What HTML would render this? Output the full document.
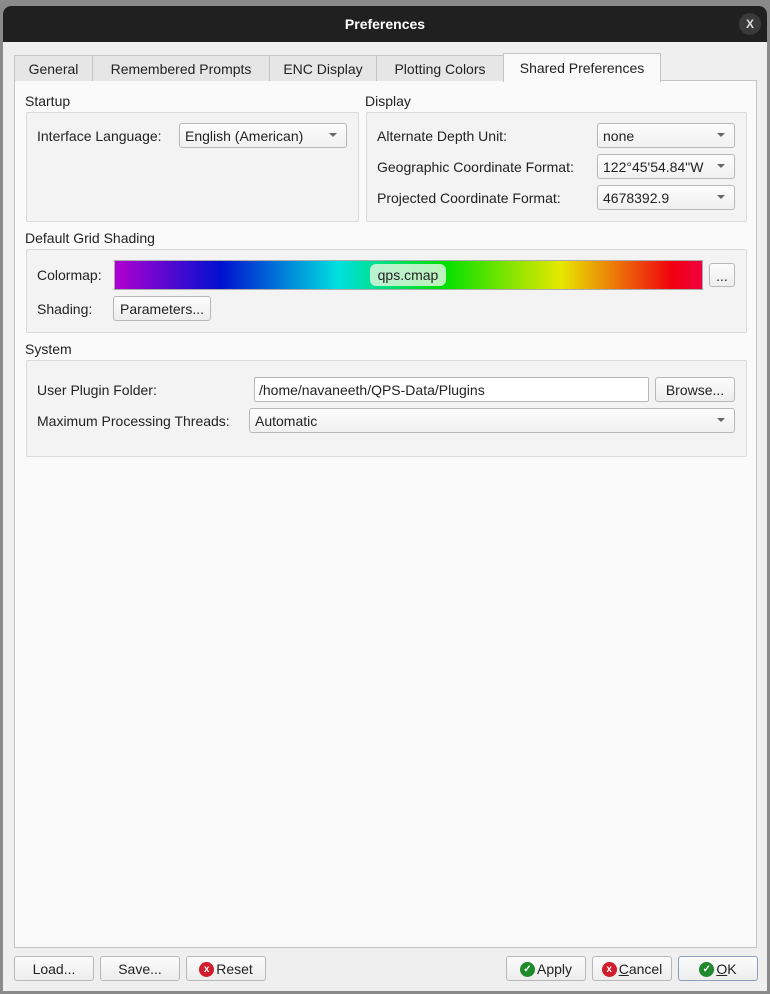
<!DOCTYPE html><html><head><style>
*{box-sizing:border-box;margin:0;padding:0}
body{width:770px;height:994px;background:#8a8a8a;font-family:"Liberation Sans",sans-serif;font-size:14px;color:#222;position:relative;overflow:hidden}
.a{position:absolute;white-space:nowrap}
.win{position:absolute;left:3px;top:6px;width:764px;height:985px;background:#efefef;border-radius:8px 8px 0 0;overflow:hidden}
.title{position:absolute;left:0;top:0;width:764px;height:36px;background:#202020;color:#fff;font-weight:bold;text-align:center;line-height:36px;font-size:14px}
.close{position:absolute;right:6px;top:7px;width:22px;height:22px;border-radius:50%;background:#3a3a3a;color:#ddd;font-size:12px;line-height:22px;text-align:center}
.tab{position:absolute;top:55px;height:26px;border:1px solid #c4c4c4;border-bottom:none;background:#e6e6e6;text-align:center;line-height:27px;font-size:14px}
.pane{position:absolute;left:14px;top:80px;width:743px;height:868px;background:#fafafa;border:1px solid #c4c4c4}
.grp{position:absolute;border:1px solid #dadada;background:#f3f3f3;border-radius:2px}
.btn{position:absolute;border:1px solid #b8b8b8;border-radius:3px;background:linear-gradient(#fcfcfc,#ededed);font-size:14px;display:flex;align-items:center;justify-content:center;padding-top:1px}
.cb{position:absolute;border:1px solid #b8b8b8;border-radius:3px;background:linear-gradient(#fdfdfd,#f0f0f0);padding-left:5px;font-size:14px;line-height:24px}
.cb:after{content:"";position:absolute;right:9px;top:9px;border:4px solid transparent;border-top:4px solid #666;}
.ic{display:inline-block;width:15px;height:15px;border-radius:50%;color:#fff;font-size:10px;line-height:15px;text-align:center;margin-right:2px;font-weight:bold;flex:none}
.t{top:1px}
</style></head><body>
<div class="win">
<div class="title">Preferences<div class="close">X</div></div>
</div>
<div class="pane"></div>
<div class="tab" style="left:14px;width:79px">General</div>
<div class="tab" style="left:92px;width:178px">Remembered Prompts</div>
<div class="tab" style="left:269px;width:108px">ENC Display</div>
<div class="tab" style="left:376px;width:128px">Plotting Colors</div>
<div class="tab" style="left:503px;top:53px;height:29px;width:158px;background:#fafafa;line-height:29px">Shared Preferences</div>

<div class="a" style="left:25px;top:93px">Startup</div>
<div class="a" style="left:365px;top:93px">Display</div>
<div class="grp" style="left:26px;top:112px;width:333px;height:110px"></div>
<div class="grp" style="left:366px;top:112px;width:381px;height:110px"></div>
<div class="a" style="left:37px;top:128px">Interface Language:</div>
<div class="cb" style="left:179px;top:123px;width:168px;height:25px">English (American)</div>
<div class="a" style="left:377px;top:128px">Alternate Depth Unit:</div>
<div class="cb" style="left:597px;top:123px;width:138px;height:25px">none</div>
<div class="a" style="left:377px;top:159px">Geographic Coordinate Format:</div>
<div class="cb" style="left:597px;top:154px;width:138px;height:25px">122°45'54.84"W</div>
<div class="a" style="left:377px;top:190px">Projected Coordinate Format:</div>
<div class="cb" style="left:597px;top:185px;width:138px;height:25px">4678392.9</div>

<div class="a" style="left:25px;top:230px">Default Grid Shading</div>
<div class="grp" style="left:26px;top:249px;width:721px;height:84px"></div>
<div class="a" style="left:37px;top:267px">Colormap:</div>
<div class="a" style="left:114px;top:260px;width:589px;height:30px;border:1px solid #aaa;background:linear-gradient(90deg,#b000d0 0%,#0010d0 18%,#00e0e0 38%,#00e000 56%,#e8e800 76%,#f00010 95%,#f00040 100%)"></div>
<div class="a" style="left:370px;top:264px;width:76px;height:22px;border-radius:6px;background:rgba(220,245,220,0.85);text-align:center;line-height:23px">qps.cmap</div>
<div class="btn" style="left:709px;top:263px;width:26px;height:24px">...</div>
<div class="a" style="left:37px;top:301px">Shading:</div>
<div class="btn" style="left:113px;top:296px;width:98px;height:25px">Parameters...</div>

<div class="a" style="left:25px;top:341px">System</div>
<div class="grp" style="left:26px;top:360px;width:721px;height:97px"></div>
<div class="a" style="left:37px;top:382px">User Plugin Folder:</div>
<div class="a" style="left:254px;top:377px;width:395px;height:25px;border:1px solid #b8b8b8;border-radius:2px;background:#fff;padding-left:4px;line-height:24px">/home/navaneeth/QPS-Data/Plugins</div>
<div class="btn" style="left:655px;top:377px;width:80px;height:25px">Browse...</div>
<div class="a" style="left:37px;top:413px">Maximum Processing Threads:</div>
<div class="cb" style="left:249px;top:408px;width:486px;height:25px">Automatic</div>

<div class="btn" style="left:14px;top:956px;width:80px;height:25px">Load...</div>
<div class="btn" style="left:100px;top:956px;width:80px;height:25px">Save...</div>
<div class="btn" style="left:186px;top:956px;width:80px;height:25px"><span class="ic" style="background:#d01c2c">x</span>Reset</div>
<div class="btn" style="left:506px;top:956px;width:80px;height:25px"><span class="ic" style="background:#1e8a2c">✓</span>Apply</div>
<div class="btn" style="left:592px;top:956px;width:80px;height:25px"><span class="ic" style="background:#d01c2c">x</span><u>C</u>ancel</div>
<div class="btn" style="left:678px;top:956px;width:80px;height:25px;border-color:#8aa0b8"><span class="ic" style="background:#1e8a2c">✓</span><u>O</u>K</div>
</body></html>
